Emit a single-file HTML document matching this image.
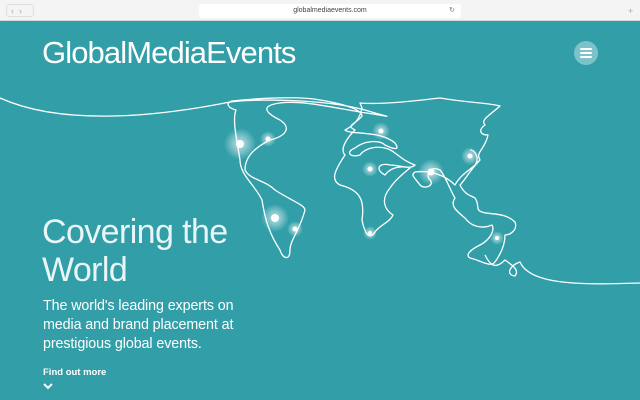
<!DOCTYPE html>
<html><head><meta charset="utf-8"><style>
*{margin:0;padding:0;box-sizing:border-box}
body{width:640px;height:400px;overflow:hidden;background:#319ea8;font-family:"Liberation Sans",sans-serif;position:relative}
.chrome{position:absolute;left:0;top:0;width:640px;height:21px;background:#f4f4f4;border-bottom:1px solid #d8d8d8}
.url{position:absolute;left:199px;top:4px;width:262px;height:14px;background:#fff;border-radius:3px;font-size:7px;color:#444;text-align:center;line-height:14px}
.nav{position:absolute;top:4px;font-size:9px;color:#aaa;line-height:12px}
.logo{position:absolute;left:42px;top:35px;color:#fff;font-size:31px;letter-spacing:-0.9px;font-weight:300}
.menu{position:absolute;left:574px;top:41px;width:24px;height:24px;border-radius:50%;background:#7cc3c9}
.menu i{position:absolute;left:6px;width:12px;height:2px;background:#fff;border-radius:1px}
h1{position:absolute;left:42px;top:213px;color:#e9f5f6;font-weight:300;font-size:34px;line-height:38px;letter-spacing:-0.6px}
p{position:absolute;left:43px;top:297px;color:#fff;font-size:14.3px;line-height:19px;letter-spacing:-0.1px}
.find{position:absolute;left:43px;top:367px;color:#fff;font-weight:bold;font-size:9.5px}
</style></head><body>
<div class="chrome">
<div class="nav" style="left:6px;border:1px solid #ddd;border-radius:3px;width:28px;height:13px;padding-left:4px">‹ &nbsp;›</div>
<div class="url">globalmediaevents.com<span style="position:absolute;right:6px;color:#777">↻</span></div>
<div class="nav" style="left:628px;top:5px">+</div>
</div>
<div class="logo">GlobalMediaEvents</div>
<div class="menu"><i style="top:7px"></i><i style="top:11px"></i><i style="top:15px"></i></div>
<svg style="position:absolute;left:0;top:0" width="640" height="400">
<defs><radialGradient id="g"><stop offset="0" stop-color="#fff" stop-opacity=".7"/><stop offset=".6" stop-color="#fff" stop-opacity=".3"/><stop offset="1" stop-color="#fff" stop-opacity="0"/></radialGradient></defs>
<g fill="none" stroke="#fff" stroke-width="1.3" stroke-linejoin="round">
<path d="M0,98 C60,125 150,118 230,102 C250,99 320,98 365,110 C390,118 400,118 360,112 C330,107 300,100 280,103 C265,105 260,110 280,120 C295,130 280,138 270,140 C250,150 245,160 245,170 C250,180 265,180 275,190 C290,200 305,205 305,210 C300,230 290,240 290,250 C290,262 282,258 280,250 C270,235 265,220 262,200 C255,185 240,175 240,160 C237,140 232,120 236,110 C228,108 225,103 232,101 C260,98 300,96 320,100 C345,104 362,110 362,116 C355,125 345,125 355,130 C345,140 340,150 345,155 C335,170 330,180 340,185 C360,190 365,200 362,220 C365,235 370,240 375,232 C380,225 390,222 393,215 C385,210 380,200 390,188 C395,180 405,172 410,168 C400,165 390,168 385,175 C375,170 378,162 390,165 C400,165 410,170 415,165 C400,160 395,150 385,148 C370,145 362,152 360,155 C350,158 345,152 355,148 C365,140 380,140 385,145 C395,150 400,150 395,143 C380,130 350,135 345,130 C355,125 360,118 362,108 L360,103 C385,105 420,100 440,98 C470,103 490,103 500,106 C490,115 480,120 485,125 C478,130 480,135 488,135 C485,150 475,152 480,160 C470,170 465,180 460,185 C465,195 470,195 475,198 C480,205 475,210 482,212 C490,215 505,212 515,222 C518,230 510,235 505,235 C505,245 500,255 495,262 C490,268 480,260 470,258 C465,255 470,250 480,245 C490,240 495,230 492,225 C480,230 470,225 465,218 C455,210 450,205 455,198 C450,190 445,175 440,170 C430,165 425,175 430,180 C435,185 425,190 420,185 C415,178 410,175 415,172 C430,170 445,175 455,185 C460,175 470,170 475,165 C480,158 475,150 470,150 M485,255 C490,265 495,270 505,260 C512,265 520,270 515,276 C505,275 510,265 520,262 C530,285 580,285 640,283"/>
</g>
<g fill="url(#g)">
<circle cx="240" cy="144" r="16"/><circle cx="268" cy="139" r="8"/><circle cx="275" cy="218" r="14"/><circle cx="295" cy="229" r="8"/>
<circle cx="381" cy="131" r="9"/><circle cx="370" cy="169" r="8"/><circle cx="431" cy="172" r="13"/><circle cx="470" cy="156" r="9"/><circle cx="370" cy="233" r="7"/><circle cx="497" cy="238" r="7"/>
</g>
<g fill="#fff">
<circle cx="240" cy="144" r="4"/><circle cx="268" cy="139" r="2.5"/><circle cx="275" cy="218" r="4"/><circle cx="295" cy="229" r="2.5"/>
<circle cx="381" cy="131" r="2.5"/><circle cx="370" cy="169" r="2.5"/><circle cx="431" cy="172" r="3.5"/><circle cx="470" cy="156" r="2.5"/><circle cx="370" cy="233" r="2"/><circle cx="497" cy="238" r="2"/>
</g>
<path d="M44,384 L48,388 L52,384" fill="none" stroke="#fff" stroke-width="2"/>
</svg>
<h1>Covering the<br>World</h1>
<p>The world's leading experts on<br>media and brand placement at<br>prestigious global events.</p>
<div class="find">Find out more</div>
</body></html>
